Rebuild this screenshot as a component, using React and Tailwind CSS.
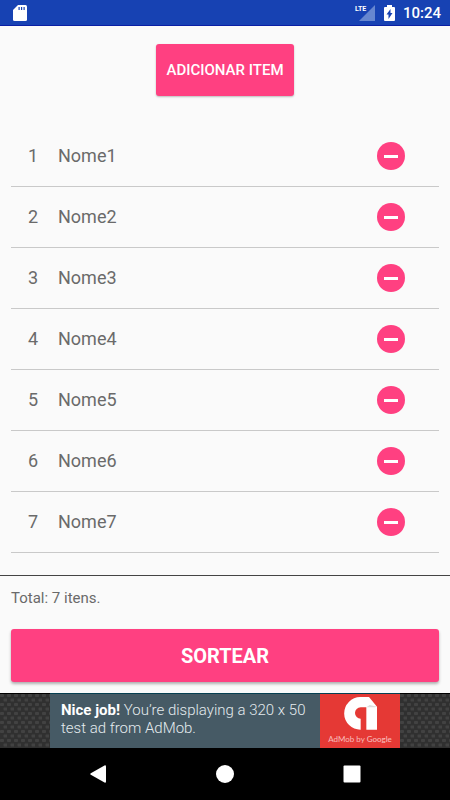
const items = ["Nome1", "Nome2", "Nome3", "Nome4", "Nome5", "Nome6", "Nome7"];

function StatusBar() {
  return (
    <header className="flex h-[26px] items-center border-b border-[#0a1fa5] bg-[#1742b3] pr-[9px] pl-[13px] text-white">
      <svg width="14" height="18" viewBox="0 0 14 18" aria-hidden="true">
        <path d="M5 1h7.500q1.500 0 1.500 1.500v13q0 1.500-1.500 1.500h-11q-1.500 0-1.500-1.500v-9.500z" fill="#fff" />
        <path d="M5.500 3h1.200v3h-1.200zM8 3h1.200v3h-1.200zM10.500 3h1.200v3h-1.200z" fill="#1742b3" />
      </svg>
      <div className="ml-auto flex items-center">
        <div className="relative h-5 w-5">
          <svg className="absolute inset-0" width="20" height="20" viewBox="0 0 20 20" aria-hidden="true">
            <path d="M20 2v16H4z" fill="#6686d0" />
          </svg>
          <span className="absolute top-0 left-0 font-['Liberation_Sans_Narrow',Roboto,sans-serif] text-[7px] leading-[12px] font-bold">LTE</span>
        </div>
        <svg className="ml-[9px]" width="11" height="18" viewBox="0 0 11 18" aria-hidden="true">
          <path d="M3 1h5v2h2q1 0 1 1v12q0 1-1 1h-9q-1 0-1-1v-12q0-1 1-1h2z" fill="#fff" />
          <path d="M6.500 5v4h2l-4 6v-4.500h-2z" fill="#1742b3" />
        </svg>
        <time className="ml-2 text-[15px] leading-5 font-medium">10:24</time>
      </div>
    </header>
  );
}

function Row({ index, name }) {
  return (
    <li className="flex h-[61px] items-center border-b border-[#c9c9c9] pr-[34px] pl-[17px] text-[18px] leading-6 text-[#6a6a6a]">
      <span className="w-[30px]">{index}</span>
      <span className="flex-1">{name}</span>
      <button type="button" aria-label={"Remover " + name} className="flex size-[28px] items-center justify-center rounded-full bg-[#ff4081]">
        <span className="h-[3px] w-[14px] bg-white" />
      </button>
    </li>
  );
}

function AdTexture() {
  return (
    <svg className="h-full min-w-0 flex-1" aria-hidden="true">
      <defs>
        <pattern id="mesh" width="7" height="9" patternUnits="userSpaceOnUse">
          <rect width="7" height="9" fill="#303030" />
          <rect x="0" y="1" width="4" height="3" rx="1" fill="#424242" />
          <rect x="3.500" y="5.500" width="4" height="3" rx="1" fill="#424242" />
        </pattern>
      </defs>
      <rect width="100%" height="100%" fill="url(#mesh)" />
      <rect width="100%" height="1" fill="#000" />
    </svg>
  );
}

function Ad() {
  return (
    <aside className="flex h-[55px] bg-[#333]">
      <AdTexture />
      <a href="#ad" className="flex w-[350px] shrink-0 border-t border-[#063f51] bg-[#465a65]">
        <p className="min-w-0 flex-1 pt-[7px] pl-[11px] text-[15px] leading-[18px] font-light whitespace-nowrap text-[#e4ebee]">
          <strong className="font-bold text-white">Nice job!</strong> You’re displaying a 320 x 50
          <br />
          test ad from AdMob.
        </p>
        <span className="flex w-20 shrink-0 flex-col items-center bg-[#e53935] pt-[3px]">
          <svg width="33" height="33" viewBox="0 0 99 99" aria-hidden="true">
            <path
              d="M49 0H75L99 29V98H67V31H50A17 17 0 0 0 50 65V98A49 49 0 0 1 49 0Z"
              fill="#fff"
            />
            <path d="M67 31h25l7-2-22-5z" fill="#ddd" />
          </svg>
          <span className="mt-[3px] font-[Lato,sans-serif] text-[8px] leading-[12px] whitespace-nowrap text-[#f9bcbb]">
            AdMob by <span className="font-medium">Google</span>
          </span>
        </span>
      </a>
      <AdTexture />
    </aside>
  );
}

function NavigationBar() {
  return (
    <nav className="flex h-[52px] items-center justify-center gap-[109px] bg-black">
      <button type="button" aria-label="Voltar">
        <svg width="18" height="18" viewBox="0 0 18 18" fill="#fff" aria-hidden="true">
          <path d="M15.500.4Q17 0 17 1.500v15q0 1.500-1.500 1.100L1.800 9.800q-1.300-.8 0-1.600z" />
        </svg>
      </button>
      <button type="button" aria-label="Início">
        <svg width="18" height="18" viewBox="0 0 18 18" fill="#fff" aria-hidden="true">
          <circle cx="9" cy="9" r="9" />
        </svg>
      </button>
      <button type="button" aria-label="Recentes">
        <svg width="18" height="18" viewBox="0 0 18 18" fill="#fff" aria-hidden="true">
          <rect x=".5" y=".5" width="17" height="17" rx="1" />
        </svg>
      </button>
    </nav>
  );
}

export default function App() {
  return (
    <div className="flex min-h-screen flex-col bg-[#fafafa] font-[Roboto,sans-serif]">
      <StatusBar />
      <main className="flex flex-1 flex-col">
        <div className="flex justify-center pt-[18px] pb-[30px]">
          <button type="button" className="h-[52px] rounded-[3px] bg-[#ff4081] px-[10px] text-[15px] leading-5 font-medium text-white shadow-[0_1px_2px_rgba(0,0,0,0.25)]">
            ADICIONAR ITEM
          </button>
        </div>
        <ul className="flex-1 px-[11px]">
          {items.map((name, i) => (
            <Row key={name} index={i + 1} name={name} />
          ))}
        </ul>
        <section className="border-t border-[#444] px-[11px] pt-3 pb-[11px]">
          <p className="text-[15px] leading-5 text-[#6a6a6a]">Total: {items.length} itens.</p>
          <button type="button" className="mt-[21px] h-[53px] w-full rounded-[3px] bg-[#ff4081] text-[20px] leading-6 font-bold text-white shadow-[0_2px_3px_rgba(0,0,0,0.3)]">
            SORTEAR
          </button>
        </section>
      </main>
      <Ad />
      <NavigationBar />
    </div>
  );
}
